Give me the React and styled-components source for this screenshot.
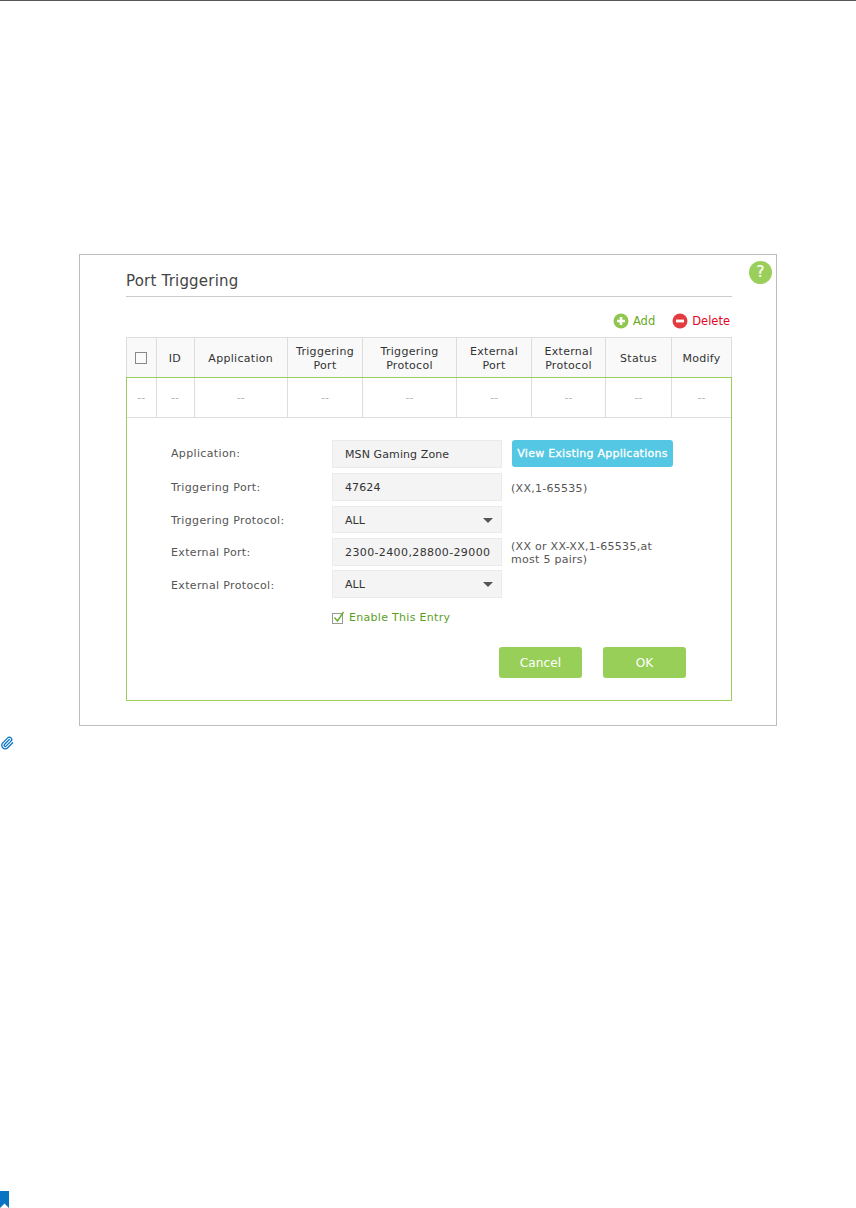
import React from "react";
import styled, { createGlobalStyle } from "styled-components";
import { Paperclip } from "lucide-react";

const Global = createGlobalStyle`
  html, body { margin: 0; padding: 0; background: #fff; }
  body { font-family: "DejaVu Sans", Verdana, sans-serif; font-size: 11px; color: #333; }
`;

const Page = styled.div`
  width: 856px;
  height: 1208px;
  display: flex;
  flex-direction: column;
  border-top: 1px solid #555;
  box-sizing: border-box;
  overflow: hidden;
`;
const Panel = styled.section`
  position: relative;
  box-sizing: border-box;
  width: 698px;
  height: 472px;
  margin: 253px 0 0 79px;
  border: 1px solid #bdbdbd;
  padding: 15px 44px 0 46px;
`;
const Help = styled.div`
  position: absolute;
  top: 6px;
  right: 4px;
  width: 23px;
  height: 23px;
  border-radius: 50%;
  background: #9bcf5b;
  color: #fff;
  font: 400 15px/23px "DejaVu Sans", sans-serif;
  -webkit-text-stroke: 0.2px #fff;
  text-align: center;
`;
const Title = styled.h2`
  margin: 0;
  height: 26px;
  line-height: 22px;
  font-size: 15px;
  font-weight: 400;
  letter-spacing: 0.2px;
  color: #444;
  border-bottom: 1px solid #ccc;
`;
const Tools = styled.div`
  height: 40px;
  display: flex;
  justify-content: flex-end;
  align-items: flex-start;
  gap: 17px;
  padding: 16px 2px 0 0;
  box-sizing: border-box;
`;
const Tool = styled.span`
  display: flex;
  align-items: center;
  gap: 4px;
  font-size: 11.5px;
  line-height: 16px;
  color: ${(p) => p.$color};
`;
const Grid = `
  display: grid;
  grid-template-columns: 28.5px 38px 93.5px 75px 94px 75px 74px 66px 60px;
`;
const HeadRow = styled.div`
  ${Grid}
  height: 39px;
  background: #f9f9f9;
  border: 1px solid #ddd;
  border-bottom: 0;
  box-sizing: content-box;
  width: 604px;
`;
const HeadCell = styled.div`
  display: flex;
  align-items: center;
  justify-content: center;
  text-align: center;
  font-size: 11px;
  line-height: 14.5px;
  letter-spacing: 0.3px;
  color: #333;
  padding-top: 3px;
  border-left: 1px solid #ddd;
  &:first-child { border-left: 0; }
`;
const CheckBox = styled.span`
  display: block;
  width: 10px;
  height: 10px;
  margin-top: -3px;
  border: 1px solid #888;
  background: #fafafa;
`;
const EditArea = styled.div`
  box-sizing: border-box;
  width: 606px;
  height: 324px;
  border: 1px solid #9bcf5b;
`;
const DataRow = styled.div`
  ${Grid}
  height: 39px;
  border-bottom: 1px solid #ddd;
`;
const DataCell = styled.div`
  display: flex;
  align-items: center;
  justify-content: center;
  font-size: 11px;
  color: #b5b5b5;
  border-left: 1px solid #ddd;
  &:first-child { border-left: 0; }
`;
const Form = styled.div`
  padding: 22px 0 0 44px;
  display: flex;
  flex-direction: column;
`;
const Row = styled.div`
  display: flex;
  align-items: flex-start;
  height: ${(p) => p.$h}px;
`;
const Label = styled.label`
  width: 161px;
  height: 28px;
  padding-top: ${(p) => p.$dy || 0}px;
  box-sizing: border-box;
  line-height: 28px;
  font-size: 11px;
  letter-spacing: 0.35px;
  color: #555;
`;
const Field = styled.div`
  box-sizing: border-box;
  width: 170px;
  height: ${(p) => p.$h || 28}px;
  padding: ${(p) => p.$dy || 0}px 8px 0 12px;
  display: flex;
  align-items: center;
  justify-content: space-between;
  white-space: nowrap;
  background: #f4f4f4;
  border: 1px solid #eaeaea;
  font-size: 11px;
  letter-spacing: ${(p) => p.$ls || 0.1}px;
  color: #333;
`;
const Arrow = styled.i`
  width: 0;
  height: 0;
  border-left: 5.5px solid transparent;
  border-right: 5.5px solid transparent;
  border-top: 5.5px solid #555;
`;
const Hint = styled.div`
  margin: 0 0 2px 9px;
  width: 165px;
  font-size: 11px;
  line-height: 13px;
  letter-spacing: 0.28px;
  color: #555;
  align-self: center;
`;
const ViewButton = styled.div`
  box-sizing: border-box;
  margin-left: 10px;
  width: 161px;
  height: 27px;
  border-radius: 3px;
  background: #53c7e3;
  color: #fff;
  font-size: 11px;
  font-weight: 400;
  letter-spacing: 0.25px;
  line-height: 27px;
  text-align: center;
  white-space: nowrap;
  -webkit-text-stroke: 0.3px #fff;
`;
const Enable = styled.div`
  margin: 12px 0 0 161px;
  display: flex;
  align-items: center;
  gap: 4px;
  height: 14px;
  font-size: 11px;
  letter-spacing: 0.3px;
  color: #5a9e1e;
`;
const Actions = styled.div`
  margin: 23px 0 0 328px;
  display: flex;
  gap: 21px;
`;
const Action = styled.div`
  width: 83px;
  height: 31px;
  border-radius: 3px;
  background: #98cf59;
  color: #fff;
  font-size: 12.2px;
  line-height: 32px;
  text-align: center;
`;
const Clip = styled(Paperclip)`
  display: block;
  margin: 10px 0 0 0;
  color: #0a74c4;
`;
const Mark = styled.svg`
  display: block;
  margin-top: auto;
  margin-bottom: 0;
`;

const heads = [null, "ID", "Application", "Triggering\nPort", "Triggering\nProtocol", "External\nPort", "External\nProtocol", "Status", "Modify"];

const lines = (t) => t.split("\n").map((s, i) => <React.Fragment key={i}>{i > 0 && <br />}{s}</React.Fragment>);

export default function App() {
  return (
    <Page>
      <Global />
      <Panel>
        <Help>?</Help>
        <Title>Port Triggering</Title>
        <Tools>
          <Tool $color="#6aa81e">
            <svg width="16" height="16" viewBox="0 0 16 16"><circle cx="8" cy="8" r="7.5" fill="#8fc64f" /><path d="M8 4v8M4 8h8" stroke="#fff" strokeWidth="2.6" /></svg>
            Add
          </Tool>
          <Tool $color="#e0061f">
            <svg width="16" height="16" viewBox="0 0 16 16"><circle cx="8" cy="8" r="7.5" fill="#e23b40" /><path d="M4 8h8" stroke="#fff" strokeWidth="2.8" /></svg>
            Delete
          </Tool>
        </Tools>
        <HeadRow>
          {heads.map((h, i) => (
            <HeadCell key={i}>{h ? lines(h) : <CheckBox />}</HeadCell>
          ))}
        </HeadRow>
        <EditArea>
          <DataRow>
            {heads.map((_, i) => <DataCell key={i}>--</DataCell>)}
          </DataRow>
          <Form>
            <Row $h={33}>
              <Label>Application:</Label>
              <Field>MSN Gaming Zone</Field>
              <ViewButton>View Existing Applications</ViewButton>
            </Row>
            <Row $h={33}>
              <Label $dy={1}>Triggering Port:</Label>
              <Field>47624</Field>
              <Hint>(XX,1-65535)</Hint>
            </Row>
            <Row $h={32}>
              <Label $dy={1}>Triggering Protocol:</Label>
              <Field $h={27} $dy={1}>ALL<Arrow /></Field>
            </Row>
            <Row $h={32}>
              <Label $dy={1}>External Port:</Label>
              <Field $ls={0.38}>2300-2400,28800-29000</Field>
              <Hint>(XX or XX-XX,1-65535,at most 5 pairs)</Hint>
            </Row>
            <Row $h={28}>
              <Label $dy={2}>External Protocol:</Label>
              <Field $dy={1}>ALL<Arrow /></Field>
            </Row>
            <Enable>
              <svg width="13" height="13" viewBox="0 0 13 13"><rect x="0.5" y="2.5" width="10" height="10" fill="none" stroke="#999" /><path d="M2.5 6.5l3 3.5L11.5 1" fill="none" stroke="#6cb02a" strokeWidth="1.4" /></svg>
              Enable This Entry
            </Enable>
            <Actions>
              <Action>Cancel</Action>
              <Action>OK</Action>
            </Actions>
          </Form>
        </EditArea>
      </Panel>
      <Clip size={14} strokeWidth={2.2} />
      <Mark width="10" height="17" viewBox="0 0 10 17">
        <path d="M0 0H9V17L4.5 12.5 0 17Z" fill="#0a74c4" />
      </Mark>
    </Page>
  );
}
